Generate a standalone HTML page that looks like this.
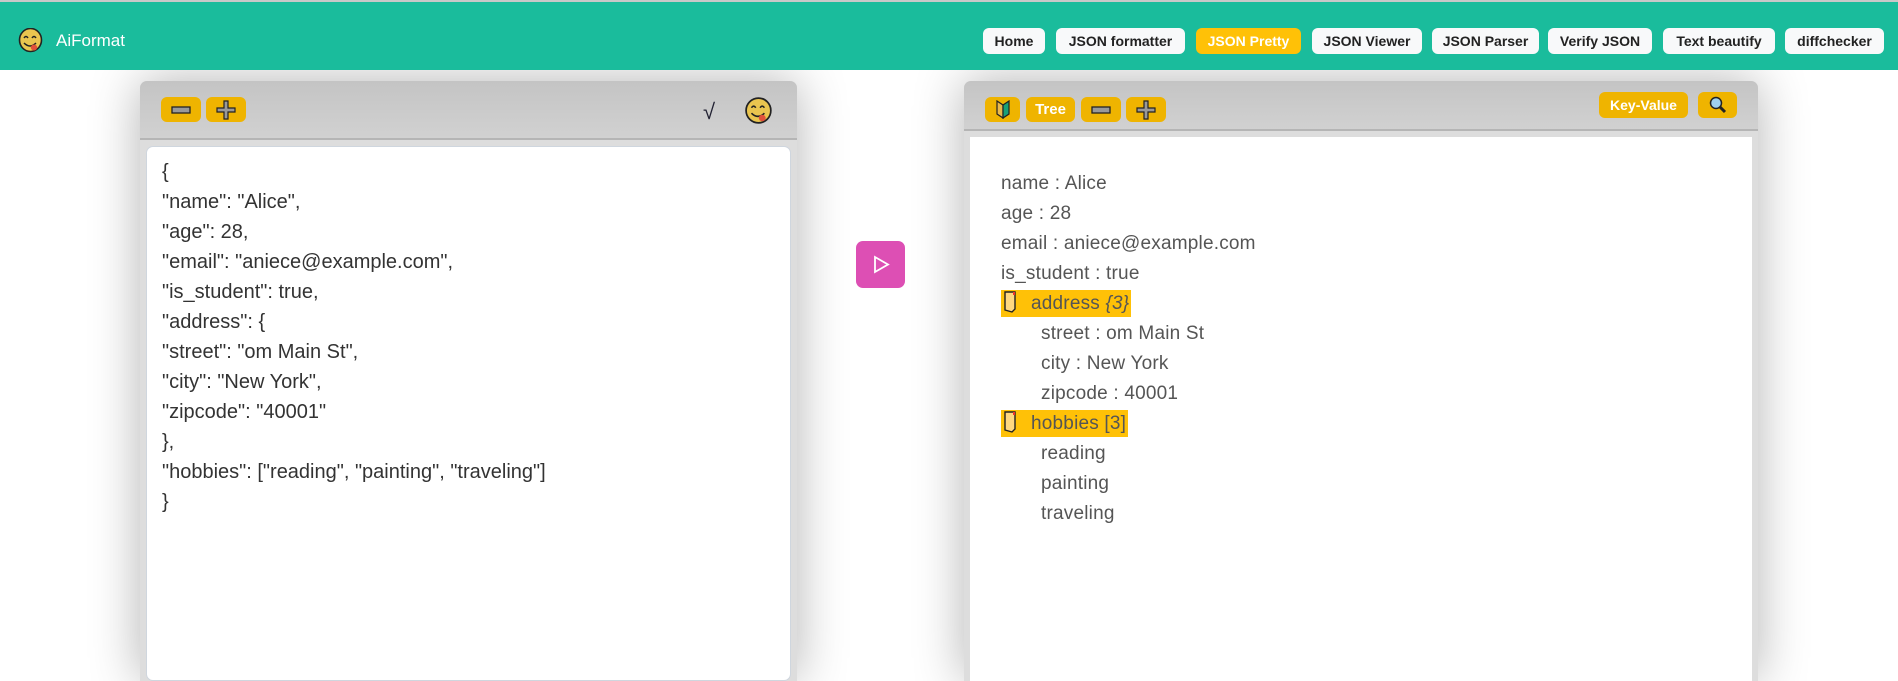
<!DOCTYPE html>
<html><head><meta charset="utf-8"><style>
*{margin:0;padding:0;box-sizing:border-box}
body{width:1898px;height:648px;overflow:hidden;background:#fff;font-family:"Liberation Sans",sans-serif;position:relative}
.hdr{position:absolute;left:0;top:0;width:1898px;height:70px;background:#1abc9c;border-top:2px solid #c8c8c8;z-index:2}
.logo{position:absolute;left:18px;top:26px}
.brand{position:absolute;left:56px;top:29px;color:#fff;font-size:17px}
.nav{position:absolute;top:26px;height:26px;border-radius:6px;background:#f8f9fa;color:#222;font-weight:bold;font-size:14px;line-height:26px;text-align:center}
.nav.act{background:#ffc107;color:#fff}
.panel{position:absolute;top:81px;height:600px;background:#ddd;border-radius:7px 7px 0 0;box-shadow:0 0 50px rgba(0,0,0,.3)}
.tb{position:absolute;left:0;top:0;right:0;background:linear-gradient(#c4c4c4,#d1d1d1);border-radius:7px 7px 0 0;border-bottom:2px solid #b5b5b5}
.btn{position:absolute;height:25px;border-radius:6px;background:#efb400;color:#fff;font-weight:bold;font-size:15px;line-height:25px;text-align:center}
.ta{position:absolute;left:6px;top:65px;right:6px;bottom:0;background:#fff;border:1px solid #cfd6de;border-radius:7px}
.code{position:absolute;left:22px;top:160px;font-size:20px;color:#333;line-height:30px}
.tree{position:absolute;left:1001px;top:169px;font-size:19px;letter-spacing:.2px;color:#555;line-height:30px}
.hl{display:inline-block;background:#ffc107;padding-right:2px;height:27px;line-height:27px;margin-top:1px}
.ind{padding-left:40px}
</style></head><body>
<div class="hdr">
<svg class="logo" width="26" height="26" viewBox="0 0 26 26"><ellipse cx="12.5" cy="12" rx="11" ry="11.5" fill="#eac54f" stroke="#222" stroke-width="1.6"/><path d="M6 10q2-3 4 0M14 10q2-3 4 0" stroke="#222" stroke-width="1.4" fill="none"/><path d="M6 15q6 6 12 0" stroke="#222" stroke-width="1.5" fill="none"/><ellipse cx="16" cy="19.5" rx="3.2" ry="3" fill="#e0513a"/></svg>
<div class="brand">AiFormat</div>
<div class="nav" style="left:983px;width:62px">Home</div>
<div class="nav" style="left:1056px;width:129px">JSON formatter</div>
<div class="nav act" style="left:1196px;width:105px">JSON Pretty</div>
<div class="nav" style="left:1312px;width:110px">JSON Viewer</div>
<div class="nav" style="left:1432px;width:107px">JSON Parser</div>
<div class="nav" style="left:1548px;width:104px">Verify JSON</div>
<div class="nav" style="left:1663px;width:112px">Text beautify</div>
<div class="nav" style="left:1785px;width:99px">diffchecker</div>
</div>

<div class="panel" style="left:140px;width:657px">
 <div class="tb" style="height:59px"></div>
 <div class="btn" style="left:21px;top:16px;width:40px"><svg width="20" height="10" viewBox="0 0 20 10" style="margin-top:8px"><rect x="1" y="2" width="18" height="6" fill="#999" stroke="#222" stroke-width="1.3"/></svg></div>
 <div class="btn" style="left:66px;top:16px;width:40px"><svg width="20" height="20" viewBox="0 0 20 20" style="margin-top:3px"><path d="M8 1h4v7h7v4h-7v7h-4v-7h-7v-4h7z" fill="#999" stroke="#222" stroke-width="1.2"/></svg></div>
 <div style="position:absolute;left:563px;top:18px;font-size:22px;color:#223">&#8730;</div>
 <svg style="position:absolute;left:605px;top:16px" width="28" height="28" viewBox="0 0 26 26"><ellipse cx="12.5" cy="12.5" rx="11.5" ry="11.5" fill="#eac54f" stroke="#222" stroke-width="1.6"/><path d="M6 10q2-3 4 0M14 10q2-3 4 0" stroke="#222" stroke-width="1.4" fill="none"/><path d="M6 15q6 6 12 0" stroke="#222" stroke-width="1.5" fill="none"/><ellipse cx="16" cy="19.5" rx="3.2" ry="3" fill="#e0513a"/></svg>
 <div class="ta"></div>
</div>
<div class="code" style="left:162px;top:157px">{<br>"name": "Alice",<br>"age": 28,<br>"email": "aniece@example.com",<br>"is_student": true,<br>"address": {<br>"street": "om Main St",<br>"city": "New York",<br>"zipcode": "40001"<br>},<br>"hobbies": ["reading", "painting", "traveling"]<br>}</div>

<div style="position:absolute;left:856px;top:241px;width:49px;height:47px;background:#dd4fb4;border-radius:7px"><svg width="49" height="47" viewBox="0 0 49 47"><path d="M19 16v15l13-7.5z" fill="none" stroke="#fff" stroke-width="1.8"/></svg></div>

<div class="panel" style="left:964px;width:794px">
 <div class="tb" style="height:50px"></div>
 <div class="btn" style="left:21px;top:16px;width:35px"><svg width="14" height="19" viewBox="0 0 14 19" style="margin-top:3px"><path d="M1 1l6 4v13l-6-4z" fill="#e9b94a" stroke="#222" stroke-width="1.2"/><path d="M13 1l-6 4v13l6-4z" fill="#19a078" stroke="#222" stroke-width="1.2"/></svg></div>
 <div class="btn" style="left:62px;top:16px;width:49px">Tree</div>
 <div class="btn" style="left:117px;top:16px;width:40px"><svg width="20" height="10" viewBox="0 0 20 10" style="margin-top:8px"><rect x="1" y="2" width="18" height="6" fill="#999" stroke="#222" stroke-width="1.3"/></svg></div>
 <div class="btn" style="left:162px;top:16px;width:40px"><svg width="20" height="20" viewBox="0 0 20 20" style="margin-top:3px"><path d="M8 1h4v7h7v4h-7v7h-4v-7h-7v-4h7z" fill="#999" stroke="#222" stroke-width="1.2"/></svg></div>
 <div class="btn" style="left:635px;top:11px;width:89px;height:26px;line-height:26px;font-size:14px">Key-Value</div>
 <div class="btn" style="left:734px;top:11px;width:39px;height:26px"><svg width="20" height="20" viewBox="0 0 20 20" style="margin-top:3px"><circle cx="8" cy="8" r="5.5" fill="#9fd0ef" stroke="#222" stroke-width="1.5"/><path d="M12 12l5 5" stroke="#222" stroke-width="3"/></svg></div>
 <div style="position:absolute;left:6px;top:56px;right:6px;bottom:0;background:#fff"></div>
</div>
<div class="tree">
<div>name : Alice</div>
<div>age : 28</div>
<div>email : aniece@example.com</div>
<div>is_student : true</div>
<div><span class="hl"><svg width="30" height="24" viewBox="0 0 30 24" style="vertical-align:-5px"><path d="M4 2h10v17l-3 3l-7-2z" fill="#ffd880" stroke="#222" stroke-width="1.4"/><rect x="12" y="2" width="2" height="3" fill="#e33"/></svg>address <i>{3}</i></span></div>
<div class="ind">street : om Main St</div>
<div class="ind">city : New York</div>
<div class="ind">zipcode : 40001</div>
<div><span class="hl"><svg width="30" height="24" viewBox="0 0 30 24" style="vertical-align:-5px"><path d="M4 2h10v17l-3 3l-7-2z" fill="#ffd880" stroke="#222" stroke-width="1.4"/><rect x="12" y="2" width="2" height="3" fill="#e33"/></svg>hobbies [3]</span></div>
<div class="ind">reading</div>
<div class="ind">painting</div>
<div class="ind">traveling</div>
</div>
</body></html>
